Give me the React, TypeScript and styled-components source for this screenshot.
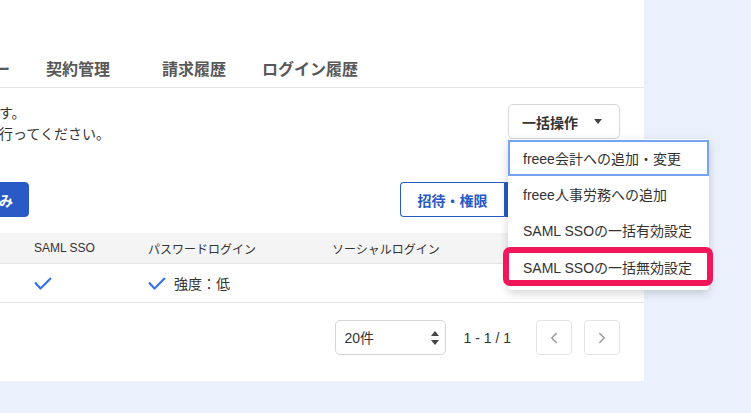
import styled, { createGlobalStyle } from 'styled-components';
import { ChevronLeft, ChevronRight } from 'lucide-react';

const GlobalStyle = createGlobalStyle`
  html, body {
    margin: 0;
    padding: 0;
    background: #eaf1fd;
    overflow: hidden;
  }
  body {
    font-family: "Liberation Sans", "Noto Sans CJK JP", sans-serif;
    color: #333;
  }
  * { box-sizing: border-box; }
`;

const tabs = ['所属メンバー', '契約管理', '請求履歴', 'ログイン履歴'];

const menuItems = [
  'freee会計への追加・変更',
  'freee人事労務への追加',
  'SAML SSOの一括有効設定',
  'SAML SSOの一括無効設定',
];

const CheckIcon = () => (
  <svg width="18" height="13" viewBox="0 0 18 13" fill="none">
    <path d="M1 5.5 L6.5 11.5 L17 1" stroke="#3a72e4" strokeWidth="2.2" strokeLinejoin="round" />
  </svg>
);

const App = () => {
  return (
    <>
      <GlobalStyle />
      <Panel>
        <Inner>
          <TabBar>
            {tabs.map((t) => (
              <Tab key={t}>{t}</Tab>
            ))}
          </TabBar>

          <Section>
            <TopRow>
              <Description>
                <div>所属メンバーを一覧表示します。</div>
                <div>権限の変更は右のボタンから行ってください。</div>
              </Description>
              <BulkWrap>
                <BulkButton>
                  一括操作
                  <Caret />
                </BulkButton>
                <Menu>
                  {menuItems.map((m, i) => (
                    <MenuItem key={m} $focused={i === 0} $marked={i === 3}>
                      {m}
                    </MenuItem>
                  ))}
                </Menu>
              </BulkWrap>
            </TopRow>

            <ActionRow>
              <FilterGroup>
                <SearchInput placeholder="名前・メールアドレス" />
                <PrimaryButton>絞り込み</PrimaryButton>
              </FilterGroup>
              <SplitGroup>
                <OutlineButton>招待・権限</OutlineButton>
                <PrimaryButton $joined>メンバー追加</PrimaryButton>
              </SplitGroup>
            </ActionRow>
          </Section>

          <Table>
            <HeadRow>
              <Cell>氏名</Cell>
              <Cell>SAML SSO</Cell>
              <Cell>パスワードログイン</Cell>
              <Cell>ソーシャルログイン</Cell>
            </HeadRow>
            <BodyRow>
              <Cell>山田 太郎</Cell>
              <Cell>
                <CheckIcon />
              </Cell>
              <Cell>
                <CheckIcon />
                <Strength>強度：低</Strength>
              </Cell>
              <Cell />
            </BodyRow>
          </Table>

          <Footer>
            <SelectWrap>
              <PerPage defaultValue="20">
                <option value="20">20件</option>
                <option value="50">50件</option>
                <option value="100">100件</option>
              </PerPage>
              <SelectArrows width="8" height="14" viewBox="0 0 8 14">
                <path d="M4 0 L8 5 L0 5 Z" fill="#444" />
                <path d="M4 14 L8 9 L0 9 Z" fill="#444" />
              </SelectArrows>
            </SelectWrap>
            <PageInfo>1 - 1 / 1</PageInfo>
            <PageNav>
              <PageButton>
                <ChevronLeft size={18} strokeWidth={2} />
              </PageButton>
              <PageButton>
                <ChevronRight size={18} strokeWidth={2} />
              </PageButton>
            </PageNav>
          </Footer>
        </Inner>
      </Panel>
    </>
  );
};

export default App;

const Panel = styled.div`
  width: 644px;
  height: 381px;
  background: #fff;
  padding-top: 50px;
`;

const Inner = styled.div`
  margin-left: -195px;
  width: 839px;
`;

const TabBar = styled.div`
  display: flex;
  padding-left: 99px;
  border-bottom: 1px solid #e6e6e6;
`;

const Tab = styled.div`
  width: 116px;
  text-align: center;
  font-size: 16px;
  font-weight: 700;
  color: #585858;
  line-height: 18px;
  padding: 11px 0 8px;
  white-space: nowrap;
`;

const Section = styled.div`
  padding-right: 24px;
`;

const TopRow = styled.div`
  display: flex;
  justify-content: space-between;
  align-items: flex-start;
  margin-top: 15px;
`;

const Description = styled.div`
  padding-left: 12px;
  font-size: 14px;
  line-height: 21px;
  color: #333;
`;

const BulkWrap = styled.div`
  position: relative;
  margin-top: 1px;
`;

const BulkButton = styled.button`
  display: flex;
  align-items: center;
  gap: 16px;
  height: 35px;
  width: 112px;
  padding: 0 0 0 13px;
  border: 1px solid #d6d6d6;
  border-radius: 5px;
  background: #fff;
  font-family: inherit;
  font-size: 14px;
  font-weight: 700;
  color: #333;
`;

const Caret = styled.span`
  width: 0;
  height: 0;
  border-left: 4.5px solid transparent;
  border-right: 4.5px solid transparent;
  border-top: 5px solid #444;
`;

const Menu = styled.div`
  position: absolute;
  top: 100%;
  left: 0;
  width: 201px;
  padding: 1px 0 5px;
  background: #fff;
  border-radius: 4px;
  box-shadow: 0 3px 10px rgba(0, 0, 0, 0.18);
  z-index: 10;
`;

const MenuItem = styled.div<{ $focused?: boolean; $marked?: boolean }>`
  position: relative;
  height: 36px;
  padding-left: 15px;
  display: flex;
  align-items: center;
  font-size: 14px;
  color: #333;
  white-space: nowrap;
  box-shadow: ${(p) => (p.$focused ? 'inset 0 0 0 2px #76a3f4' : 'none')};
  margin-top: ${(p) => (p.$marked ? '1px' : '0')};

  &::after {
    content: '';
    display: ${(p) => (p.$marked ? 'block' : 'none')};
    position: absolute;
    left: -5px;
    right: -4px;
    top: -2px;
    bottom: -1px;
    border: 6px solid #f0175b;
    border-radius: 7px;
  }
`;

const ActionRow = styled.div`
  display: flex;
  justify-content: space-between;
  align-items: center;
  margin-top: 37px;
`;

const FilterGroup = styled.div`
  display: flex;
  gap: 8px;
`;

const SearchInput = styled.input`
  width: 128px;
  height: 35px;
  border: 1px solid #d6d6d6;
  border-radius: 5px;
  padding: 0 10px;
  font-family: inherit;
  font-size: 13px;
`;

const SplitGroup = styled.div`
  display: flex;
`;

const PrimaryButton = styled.button<{ $joined?: boolean }>`
  height: 35px;
  padding: 0 15px;
  border: 1px solid #2859c5;
  border-radius: ${(p) => (p.$joined ? '0 4px 4px 0' : '4px')};
  background: #2859c5;
  color: #fff;
  font-family: inherit;
  font-size: 14px;
  font-weight: 700;
  white-space: nowrap;
`;

const OutlineButton = styled.button`
  height: 35px;
  width: 104px;
  padding: 0;
  border: 1px solid #2859c5;
  border-right: none;
  border-radius: 4px 0 0 4px;
  background: #fff;
  color: #2859c5;
  font-family: inherit;
  font-size: 14px;
  font-weight: 700;
`;

const Table = styled.div`
  margin-top: 16px;
`;

const HeadRow = styled.div`
  display: grid;
  grid-template-columns: 229px 114px 184px 1fr;
  align-items: center;
  height: 31px;
  background: #f5f4f4;
  border-bottom: 1px solid #e4e4e4;
  font-size: 12px;
  color: #333;
`;

const BodyRow = styled(HeadRow)`
  height: 39px;
  background: #fff;
  font-size: 14px;
`;

const Cell = styled.div`
  display: flex;
  align-items: center;
  white-space: nowrap;
`;

const Strength = styled.span`
  margin-left: 8px;
  color: #333;
`;

const Footer = styled.div`
  display: flex;
  justify-content: flex-end;
  align-items: center;
  padding: 17px 24px 0 0;
`;

const SelectWrap = styled.div`
  position: relative;
`;

const PerPage = styled.select`
  appearance: none;
  width: 111px;
  height: 35px;
  padding: 0 0 0 9px;
  border: 1px solid #d5d5d5;
  border-radius: 5px;
  background: #fff;
  font-family: inherit;
  font-size: 14px;
  color: #333;
`;

const SelectArrows = styled.svg`
  position: absolute;
  right: 7px;
  top: 11px;
  pointer-events: none;
`;

const PageInfo = styled.span`
  margin-left: 18px;
  font-size: 14px;
  color: #333;
`;

const PageNav = styled.div`
  display: flex;
  gap: 12px;
  margin-left: 25px;
`;

const PageButton = styled.button`
  width: 36px;
  height: 35px;
  display: flex;
  align-items: center;
  justify-content: center;
  padding: 0;
  border: 1px solid #e3e3e3;
  border-radius: 4px;
  background: #fff;
  color: #9a9a9a;
`;
